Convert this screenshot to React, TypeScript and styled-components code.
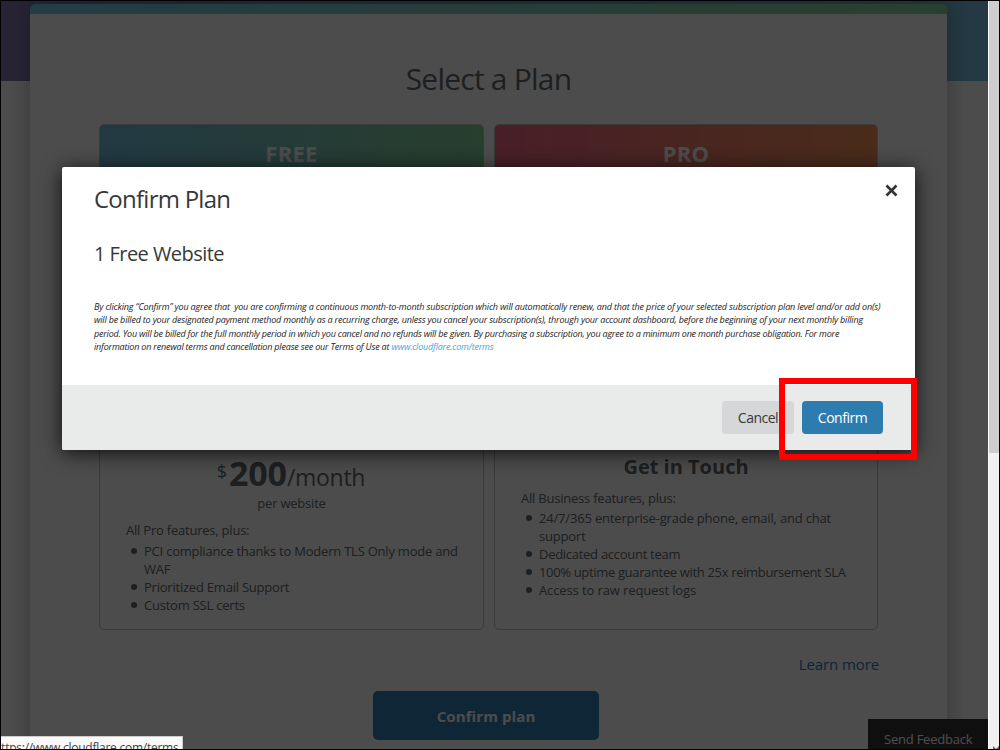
import React from "react";
import styled, { createGlobalStyle } from "styled-components";

const GlobalStyle = createGlobalStyle`
  * { box-sizing: border-box; }
  body { margin: 0; font-family: "Open Sans", "Noto Sans", sans-serif; color: #62686c; overflow: hidden; }
  h1, h2, h3, p, ul { margin: 0; padding: 0; font-weight: 400; }
  button { font-family: inherit; border: 0; padding: 0; }
`;

const Frame = styled.div`
  position: relative;
  display: flex;
  width: 1000px;
  height: 750px;
  border: 1px solid #000;
  overflow: hidden;
`;

const Page = styled.main`
  width: 987px;
  height: 748px;
  padding: 3px 41px 0 29px;
  overflow: hidden;
  background: linear-gradient(90deg, #8577b4, #78c1e2) no-repeat 0 0 / 100% 80px #fff;
`;

const Sheet = styled.section`
  height: 800px;
  padding: 0 69px;
  border-radius: 5px 5px 0 0;
  background: linear-gradient(90deg, #78c8e4, #8bd39c) no-repeat 0 0 / 100% 10px #fff;
  box-shadow: 0 0 24px rgba(0, 0, 0, 0.28);
  display: flex;
  flex-direction: column;
`;

const PageTitle = styled.h1`
  margin: 55px 0 25px;
  font-size: 30px;
  line-height: 40px;
  text-align: center;
  letter-spacing: -0.78px;
`;

const Plans = styled.div`
  display: grid;
  grid-template-columns: 385px 384px;
  gap: 10px;
  height: 506px;
`;

const Plan = styled.article`
  display: flex;
  flex-direction: column;
  border: 1px solid #c4c4c4;
  border-radius: 5px;
  overflow: hidden;
`;

const PlanHead = styled.h2<{ $from: string; $to: string }>`
  height: 58px;
  background: linear-gradient(90deg, ${(p) => p.$from}, ${(p) => p.$to});
  color: #fff;
  font-size: 22px;
  font-weight: 700;
  line-height: 56px;
  letter-spacing: 0.3px;
  text-align: center;
`;

const PlanBody = styled.div<{ $bottom: number }>`
  flex: 1;
  display: flex;
  flex-direction: column;
  justify-content: flex-end;
  padding: 0 16px ${(p) => p.$bottom}px;
  font-size: 13px;
  line-height: 18px;
  letter-spacing: -0.22px;
`;

const Price = styled.div`
  display: flex;
  justify-content: center;
  align-items: baseline;
  height: 40px;
  line-height: 40px;
  margin: 0 1px 1px 0;
`;

const Currency = styled.sup`
  align-self: flex-start;
  font-size: 18px;
  line-height: 36px;
  margin-right: 2px;
`;

const Amount = styled.strong`
  font-size: 34px;
  font-weight: 700;
  letter-spacing: -0.1px;
`;

const Period = styled.span`
  font-size: 23px;
  letter-spacing: -0.3px;
`;

const PerSite = styled.p`
  margin-bottom: 9px;
  text-align: center;
`;

const Contact = styled.h3`
  margin: 0 0 7px;
  font-size: 20px;
  font-weight: 700;
  line-height: 30px;
  letter-spacing: 0;
  text-align: center;
`;

const Intro = styled.p`
  padding-left: 10px;
`;

const Features = styled.ul<{ $gap: number }>`
  margin-top: ${(p) => p.$gap}px;
  padding-left: 10px;
  list-style: none;
`;

const Feature = styled.li<{ $track?: number }>`
  display: flex;
  gap: 7px;
  padding-left: 5px;
  letter-spacing: ${(p) => p.$track ?? -0.22}px;
  &::before {
    content: "";
    flex: none;
    width: 6px;
    height: 6px;
    margin-top: 6px;
    border-radius: 50%;
    background: #62686c;
  }
`;

const LearnMore = styled.a`
  align-self: flex-end;
  margin: 24px -1px 17px 0;
  color: #2f7bbf;
  font-size: 15px;
  line-height: 20px;
  letter-spacing: -0.1px;
`;

const PlanButton = styled.button`
  align-self: center;
  width: 226px;
  height: 49px;
  margin-right: 5px;
  flex: none;
  border-radius: 5px;
  background: #2f7fb4;
  color: #fff;
  font-size: 15px;
  font-weight: 700;
  letter-spacing: 0.1px;
`;

const Feedback = styled.div`
  position: absolute;
  right: 11px;
  bottom: 0;
  width: 120px;
  height: 30px;
  padding-left: 16px;
  background: #333;
  color: #fff;
  font-size: 13px;
  line-height: 40px;
  letter-spacing: -0.22px;
  white-space: nowrap;
  overflow: hidden;
`;

const Scrollbar = styled.div`
  width: 11px;
  height: 748px;
  border-left: 1px solid #fff;
  background: #f0f0f0;
  display: flex;
  flex-direction: column;
  justify-content: space-between;
  align-items: flex-end;
`;

const Thumb = styled.div`
  width: 100%;
  height: 452px;
  background: #cdcdcd;
`;

const Backdrop = styled.div`
  position: absolute;
  inset: 0 11px 0 0;
  padding: 166px 73px 0 61px;
  background: rgba(0, 0, 0, 0.7);
`;

const Dialog = styled.div`
  height: 283px;
  display: flex;
  flex-direction: column;
  border-radius: 2px;
  background: #fff;
  color: #36393a;
  box-shadow: 0 3px 20px rgba(0, 0, 0, 0.8);
`;

const DialogHead = styled.header`
  display: flex;
  justify-content: space-between;
  padding: 16px 17px 0 32px;
`;

const DialogTitle = styled.h2`
  font-size: 24px;
  line-height: 32px;
  letter-spacing: -0.75px;
`;

const Close = styled.svg`
  width: 13px;
  height: 13px;
  margin-top: 1px;
`;

const Selection = styled.h3`
  margin: 24px 32px 0;
  font-size: 20px;
  line-height: 30px;
  letter-spacing: -0.55px;
`;

const Legal = styled.p`
  margin: 31px 0 0 32px;
  color: #222;
  font-size: 9px;
  font-style: italic;
  line-height: 13.33px;
  white-space: pre;
`;

const LegalLine = styled.span<{ $track: number }>`
  display: block;
  letter-spacing: ${(p) => p.$track}px;
`;

const TermsLink = styled.a`
  color: #4da3d9;
`;

const DialogFoot = styled.footer`
  display: flex;
  justify-content: flex-end;
  gap: 8px;
  height: 65px;
  margin-top: auto;
  padding: 16px 32px;
  border-radius: 0 0 2px 2px;
  background: #e9ebea;
`;

const Button = styled.button<{ $primary?: boolean }>`
  width: ${(p) => (p.$primary ? 81 : 72)}px;
  height: 33px;
  padding-top: 1px;
  border-radius: 4px;
  background: ${(p) => (p.$primary ? "#2c7cb0" : "#d6d7d9")};
  color: ${(p) => (p.$primary ? "#fff" : "#36393a")};
  font-size: 14px;
  line-height: 32px;
  letter-spacing: -0.5px;
`;

const Marker = styled.div`
  position: absolute;
  left: 778px;
  top: 377px;
  width: 138px;
  height: 82px;
  border: 6px solid #f00;
`;

const Status = styled.div`
  position: absolute;
  left: 0;
  bottom: 0;
  width: 182px;
  height: 13px;
  border-top: 1px solid #ccc;
  border-right: 1px solid #ccc;
  background: #f9f9f9;
  color: #444;
  font-size: 12px;
  line-height: 21px;
  letter-spacing: -0.25px;
  white-space: nowrap;
  overflow: hidden;
`;

const StatusText = styled.span`
  display: block;
  margin-left: -7px;
`;

const legal = [
  { text: "By clicking “Confirm” you agree that  you are confirming a continuous month-to-month subscription which will automatically renew, and that the price of your selected subscription plan level and/or add on(s)", track: -0.16 },
  { text: "will be billed to your designated payment method monthly as a recurring charge, unless you cancel your subscription(s), through your account dashboard, before the beginning of your next monthly billing", track: -0.187 },
  { text: "period. You will be billed for the full monthly period in which you cancel and no refunds will be given. By purchasing a subscription, you agree to a minimum one month purchase obligation. For more", track: -0.208 },
  { text: "information on renewal terms and cancellation please see our Terms of Use at ", track: -0.195, link: "www.cloudflare.com/terms" },
];

const business = ["PCI compliance thanks to Modern TLS Only mode and WAF", "Prioritized Email Support", "Custom SSL certs"];
const enterprise = [
  { text: "24/7/365 enterprise-grade phone, email, and chat support", track: -0.18 },
  { text: "Dedicated account team", track: -0.28 },
  { text: "100% uptime guarantee with 25x reimbursement SLA", track: -0.34 },
  { text: "Access to raw request logs", track: -0.11 },
];

export default function App() {
  return (
    <Frame>
      <GlobalStyle />
      <Page>
        <Sheet>
          <PageTitle>Select a Plan</PageTitle>
          <Plans>
            <Plan>
              <PlanHead $from="#72bfe0" $to="#85cf98">FREE</PlanHead>
              <PlanBody $bottom={15}>
                <Price>
                  <Currency>$</Currency>
                  <Amount>200</Amount>
                  <Period>/month</Period>
                </Price>
                <PerSite>per website</PerSite>
                <Intro>All Pro features, plus:</Intro>
                <Features $gap={3}>
                  {business.map((t) => <Feature key={t}>{t}</Feature>)}
                </Features>
              </PlanBody>
            </Plan>
            <Plan>
              <PlanHead $from="#f36785" $to="#f79357">PRO</PlanHead>
              <PlanBody $bottom={30}>
                <Contact>Get in Touch</Contact>
                <Intro>All Business features, plus:</Intro>
                <Features $gap={2}>
                  {enterprise.map((f) => <Feature key={f.text} $track={f.track}>{f.text}</Feature>)}
                </Features>
              </PlanBody>
            </Plan>
          </Plans>
          <LearnMore>Learn more</LearnMore>
          <PlanButton>Confirm plan</PlanButton>
        </Sheet>
      </Page>
      <Scrollbar>
        <Thumb />
        <svg width="6" height="3" viewBox="0 0 6 3">
          <path d="M0 0L3 3L6 0V3H0Z" fill="#606060" />
        </svg>
      </Scrollbar>
      <Feedback>Send Feedback</Feedback>
      <Backdrop>
        <Dialog>
          <DialogHead>
            <DialogTitle>Confirm Plan</DialogTitle>
            <Close viewBox="0 0 13 13">
              <path d="M1.5 1.5L11.5 11.5M11.5 1.5L1.5 11.5" stroke="#333" strokeWidth="2.6" />
            </Close>
          </DialogHead>
          <Selection>1 Free Website</Selection>
          <Legal>
            {legal.map((l) => (
              <LegalLine key={l.text} $track={l.track}>
                {l.text}
                {l.link && <TermsLink>{l.link}</TermsLink>}
              </LegalLine>
            ))}
          </Legal>
          <DialogFoot>
            <Button>Cancel</Button>
            <Button $primary>Confirm</Button>
          </DialogFoot>
        </Dialog>
      </Backdrop>
      <Marker />
      <Status>
        <StatusText>https://www.cloudflare.com/terms</StatusText>
      </Status>
    </Frame>
  );
}
